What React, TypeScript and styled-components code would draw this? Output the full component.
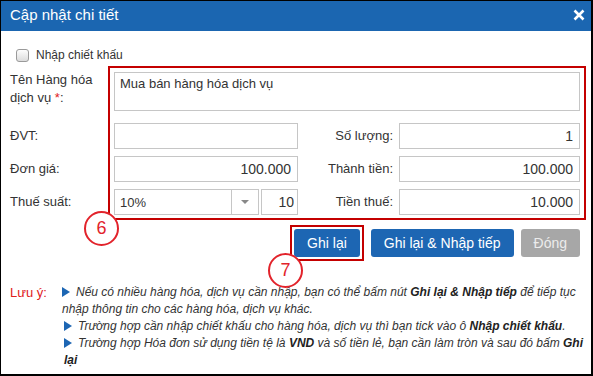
import React from 'react'
import styled, { createGlobalStyle } from 'styled-components'

const GlobalStyle = createGlobalStyle`
  body {
    margin: 0;
    font-family: 'Liberation Sans', Arial, sans-serif;
    background: #fff;
  }
`

const Dialog = styled.div`
  width: 593px;
  height: 376px;
  box-sizing: border-box;
  border: solid #000;
  border-width: 1px 2px 2px 1px;
  background: #fff;
  overflow: hidden;
`

const Header = styled.div`
  height: 30px;
  background: #1b66b1;
  color: #fff;
  display: flex;
  align-items: center;
  justify-content: space-between;
  padding: 0 6px 0 9px;
`

const Title = styled.div`
  font-size: 15px;
  line-height: 30px;
  margin-top: -3px;
`

const CloseIcon = styled.svg`
  width: 12px;
  height: 12px;
  margin-top: -2px;
`

const Body = styled.div`
  position: relative;
  padding: 15px 11px 0 9px;
  color: #333;
`

const CheckRow = styled.label`
  display: flex;
  align-items: center;
  gap: 7px;
  height: 18px;
  margin-bottom: 8px;
  padding-left: 6px;
  font-size: 12px;
`

const CheckBox = styled.span`
  width: 11px;
  height: 11px;
  border: 1px solid #9a9a9a;
  border-radius: 3px;
  background: linear-gradient(#fdfdfd, #dcdcdc);
`

const FormGrid = styled.div`
  display: grid;
  grid-template-columns: 104px 184px 101px 181px;
  grid-template-rows: 44px 26px 26px 26px;
  grid-template-areas:
    'name text text text'
    'unit unitIn qty qtyIn'
    'price priceIn total totalIn'
    'tax taxIn taxAmt taxAmtIn';
  row-gap: 7px;
  font-size: 13px;
`

const Label = styled.div<{ $area: string; $right?: boolean; $top?: boolean }>`
  grid-area: ${p => p.$area};
  align-self: ${p => (p.$top ? 'start' : 'center')};
  text-align: ${p => (p.$right ? 'right' : 'left')};
  padding-right: ${p => (p.$right ? '6px' : '0')};
  line-height: 18px;
  margin-top: ${p => (p.$top ? '-1px' : '0')};
`

const Required = styled.span`
  color: #e0201b;
`

const TextArea = styled.textarea`
  grid-area: text;
  height: 39px;
  box-sizing: border-box;
  border: 1px solid #c6c6c6;
  padding: 3px 5px;
  font-family: inherit;
  font-size: 13px;
  line-height: 16px;
  color: #333;
  resize: none;
  outline: none;
`

const Input = styled.input<{ $area?: string }>`
  grid-area: ${p => p.$area || 'auto'};
  box-sizing: border-box;
  width: 100%;
  height: 26px;
  border: 1px solid #c6c6c6;
  padding: 0 6px;
  font-family: inherit;
  font-size: 14px;
  color: #333;
  text-align: right;
  outline: none;
`

const TaxField = styled.div`
  grid-area: taxIn;
  display: flex;
  gap: 2px;
`

const Select = styled.div`
  width: 145px;
  height: 26px;
  box-sizing: border-box;
  border: 1px solid #c6c6c6;
  display: flex;
  align-items: center;
  font-size: 13px;
`

const SelectValue = styled.span`
  flex: 1;
  padding-left: 5px;
`

const SelectArrow = styled.span`
  width: 26px;
  height: 100%;
  border-left: 1px solid #c6c6c6;
  display: flex;
  align-items: center;
  justify-content: center;
  &::after {
    content: '';
    border-left: 4px solid transparent;
    border-right: 4px solid transparent;
    border-top: 4px solid #888;
  }
`

const SmallInput = styled(Input)`
  width: 37px;
  padding: 0 3px;
`

const Highlight = styled.div`
  grid-area: 1 / 2 / -1 / -1;
  margin: -6px -6px -5px -6px;
  border: 2px solid #c40000;
  pointer-events: none;
`

const Buttons = styled.div`
  display: flex;
  justify-content: flex-end;
  gap: 7px;
  margin-top: 14px;
`

const Button = styled.button<{ $muted?: boolean }>`
  height: 28px;
  padding: 0 13px;
  border: none;
  border-radius: 3px;
  background: ${p => (p.$muted ? '#a7a7a7' : '#1d66b3')};
  color: ${p => (p.$muted ? '#ececec' : '#fff')};
  font-family: inherit;
  font-size: 14px;
  display: flex;
  align-items: center;
`

const Marked = styled.span`
  display: flex;
  padding: 2px;
  margin: -4px 0 -4px -4px;
  border: 2px solid #c40000;
`

const Step = styled.div<{ $left: number; $top: number }>`
  position: absolute;
  left: ${p => p.$left}px;
  top: ${p => p.$top}px;
  width: 35px;
  height: 35px;
  box-sizing: border-box;
  border: 2px solid #e2232b;
  border-radius: 50%;
  background: #fff;
  color: #e2232b;
  font-size: 18px;
  display: flex;
  align-items: center;
  justify-content: center;
`

const Notes = styled.div`
  display: grid;
  grid-template-columns: 50px 1fr;
  margin-top: 27px;
  margin-right: -6px;
  font-size: 12px;
  line-height: 17px;
`

const NoteTitle = styled.div`
  color: #e0201b;
  font-size: 13px;
`

const NoteList = styled.div`
  font-style: italic;
  color: #333;
`

const Note = styled.div<{ $indent: number }>`
  padding-left: ${p => p.$indent}px;
  b {
    color: #222;
  }
`

const Bullet = styled.span`
  display: inline-block;
  width: 0;
  height: 0;
  border-top: 5px solid transparent;
  border-bottom: 5px solid transparent;
  border-left: 8px solid #1d66b3;
  margin-right: 6px;
  vertical-align: -1px;
`

const App = () => {
  return (
    <Dialog>
      <GlobalStyle />
      <Header>
        <Title>Cập nhật chi tiết</Title>
        <CloseIcon viewBox="0 0 12 12">
          <path d="M1.5 1.5 L10.5 10.5 M10.5 1.5 L1.5 10.5" stroke="#fff" strokeWidth="2.6" />
        </CloseIcon>
      </Header>
      <Body>
        <CheckRow>
          <CheckBox />
          Nhập chiết khấu
        </CheckRow>
        <FormGrid>
          <Label $area="name" $top>
            Tên Hàng hóa
            <br />
            dịch vụ <Required>*</Required>:
          </Label>
          <TextArea defaultValue="Mua bán hàng hóa dịch vụ" readOnly />

          <Label $area="unit">ĐVT:</Label>
          <Input $area="unitIn" readOnly defaultValue="" />
          <Label $area="qty" $right>Số lượng:</Label>
          <Input $area="qtyIn" readOnly defaultValue="1" />

          <Label $area="price">Đơn giá:</Label>
          <Input $area="priceIn" readOnly defaultValue="100.000" />
          <Label $area="total" $right>Thành tiền:</Label>
          <Input $area="totalIn" readOnly defaultValue="100.000" />

          <Label $area="tax">Thuế suất:</Label>
          <TaxField>
            <Select>
              <SelectValue>10%</SelectValue>
              <SelectArrow />
            </Select>
            <SmallInput readOnly defaultValue="10" />
          </TaxField>
          <Label $area="taxAmt" $right>Tiền thuế:</Label>
          <Input $area="taxAmtIn" readOnly defaultValue="10.000" />

          <Highlight />
        </FormGrid>

        <Buttons>
          <Marked>
            <Button>Ghi lại</Button>
          </Marked>
          <Button>Ghi lại &amp; Nhập tiếp</Button>
          <Button $muted>Đóng</Button>
        </Buttons>

        <Step $left={83} $top={180}>6</Step>
        <Step $left={267} $top={222}>7</Step>

        <Notes>
          <NoteTitle>Lưu ý:</NoteTitle>
          <NoteList>
            <Note $indent={2}>
              <Bullet />
              Nếu có nhiều hàng hóa, dịch vụ cần nhập, bạn có thể bấm nút <b>Ghi lại &amp; Nhập tiếp</b> để tiếp tục
              nhập thông tin cho các hàng hóa, dịch vụ khác.
            </Note>
            <Note $indent={4}>
              <Bullet />
              Trường hợp cần nhập chiết khấu cho hàng hóa, dịch vụ thì bạn tick vào ô <b>Nhập chiết khấu</b>.
            </Note>
            <Note $indent={4}>
              <Bullet />
              Trường hợp Hóa đơn sử dụng tiền tệ là <b>VND</b> và số tiền lẻ, bạn cần làm tròn và sau đó bấm <b>Ghi lại</b>
            </Note>
          </NoteList>
        </Notes>
      </Body>
    </Dialog>
  )
}

export default App
